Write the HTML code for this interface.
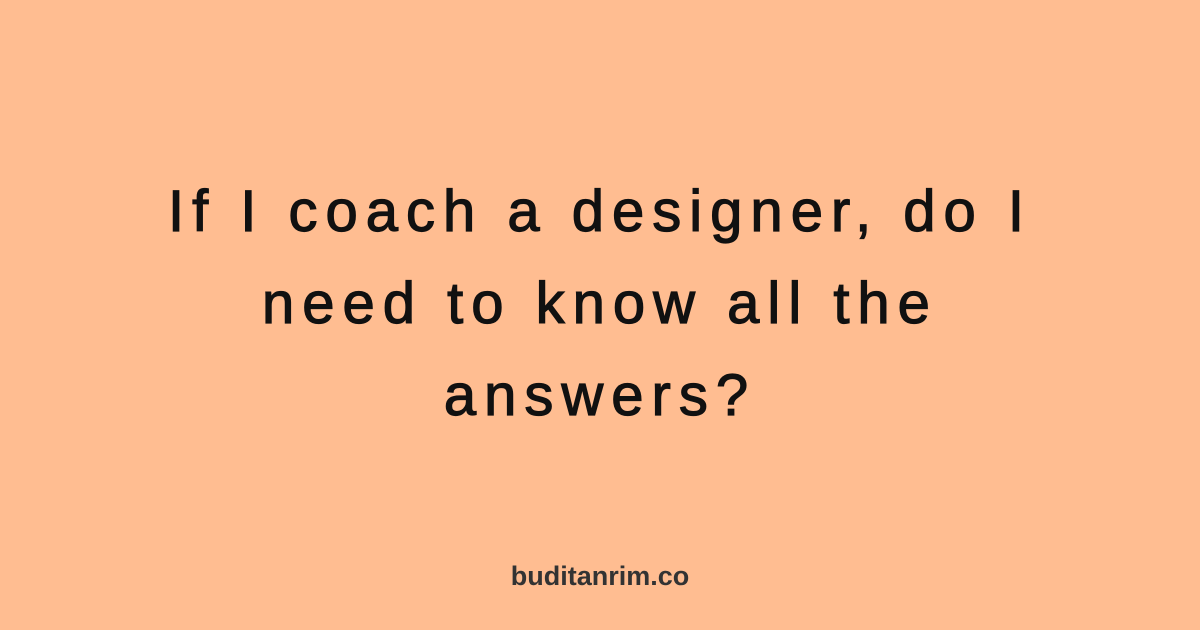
<!DOCTYPE html>
<html><head><style>
html,body{margin:0;padding:0}
body{width:1200px;height:630px;background:#FFBD91;position:relative;overflow:hidden;font-family:"Liberation Sans",sans-serif}
.t{position:absolute;left:0;top:166px;width:1200px;text-align:center;font-size:58px;line-height:92px;letter-spacing:8px;color:#111;-webkit-text-stroke:1.2px #111}
.f{position:absolute;left:0;top:561px;width:1200px;text-align:center;font-size:27px;font-weight:bold;color:#333}
</style></head><body>
<div class="t">If I coach a designer, do I<br>need to know all the<br>answers?</div>
<div class="f">buditanrim.co</div>
</body></html>
